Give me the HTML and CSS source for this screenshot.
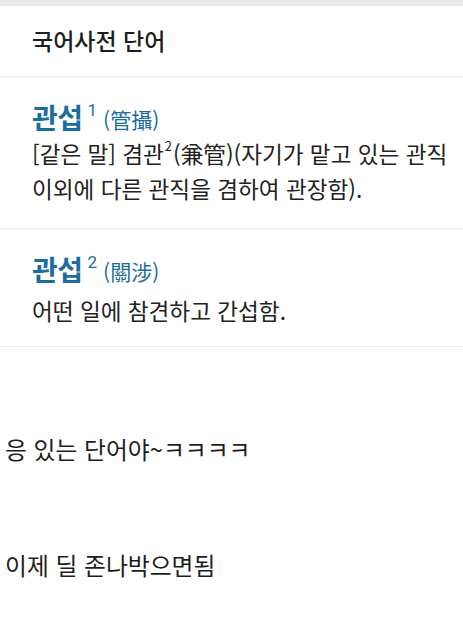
FILE: index.html
```html
<!DOCTYPE html>
<html lang="ko">
<head>
<meta charset="utf-8">
<link rel="stylesheet" href="styles.css">
</head>
<body>
<div class="topbar"></div>
<section class="card">
  <div class="card-title">국어사전 단어</div>
  <div class="entry entry-first">
    <div class="head"><span class="word">관섭</span><span class="num">1</span><span class="hanja">(管攝)</span></div>
    <div class="def"><span>[같은 말] 겸관</span><span class="dsup">2</span><span>(兼管)(자기가 맡고 있는 관직</span> <span>이외에 다른 관직을 겸하여 관장함).</span></div>
  </div>
  <div class="entry entry-second">
    <div class="head"><span class="word">관섭</span><span class="num">2</span><span class="hanja">(關涉)</span></div>
    <div class="def">어떤 일에 참견하고 간섭함.</div>
  </div>
</section>
<div class="chat">
  <p class="msg msg-one">응 있는 단어야~ㅋㅋㅋㅋ</p>
  <p class="msg msg-two">이제 딜 존나박으면됨</p>
</div>
</body>
</html>
```

FILE: styles.css
```css
html, body {
  margin: 0;
  padding: 0;
  background: #ffffff;
}
body {
  width: 463px;
  height: 630px;
  overflow: hidden;
  font-family: "Noto Sans CJK KR", "Noto Sans", sans-serif;
  color: #222222;
}
.topbar {
  height: 6px;
  background: #e8e9ea;
}
.card-title {
  padding: 19px 32px 21px;
  font-size: 23px;
  line-height: 30px;
  font-weight: 500;
  color: #1e1e1e;
  border-bottom: 1px solid #ececec;
}
.entry {
  padding: 23px 6px 22px 32px;
  border-bottom: 1px solid #ececec;
}
.entry-second {
  padding-top: 23px;
  padding-bottom: 18px;
}
.head {
  display: flex;
  align-items: flex-start;
  height: 34px;
  line-height: 34px;
  color: #1b6e9c;
}
.word {
  font-size: 28px;
  font-weight: 700;
  letter-spacing: -0.5px;
}
.num {
  font-size: 17px;
  line-height: 20px;
  margin-left: 5px;
  margin-right: 6px;
  font-family: "Roboto", "Noto Sans", sans-serif;
}
.hanja {
  font-size: 21px;
  line-height: 30px;
  margin-top: 4px;
}
.def {
  margin-top: 2px;
  font-size: 22.6px;
  line-height: 35px;
  color: #222222;
  word-break: keep-all;
}
.entry-second .def {
  margin-top: 7px;
}
.dsup {
  display: inline-block;
  font-size: 13px;
  line-height: 10px;
  vertical-align: 12px;
  margin-left: 1px;
  margin-right: 1px;
}
.chat {
  padding-left: 5px;
}
.msg {
  margin: 0;
  font-size: 23.8px;
  line-height: 32px;
  color: #1e1e1e;
}
.msg-one {
  margin-top: 86px;
}
.msg-two {
  margin-top: 84px;
}
```
